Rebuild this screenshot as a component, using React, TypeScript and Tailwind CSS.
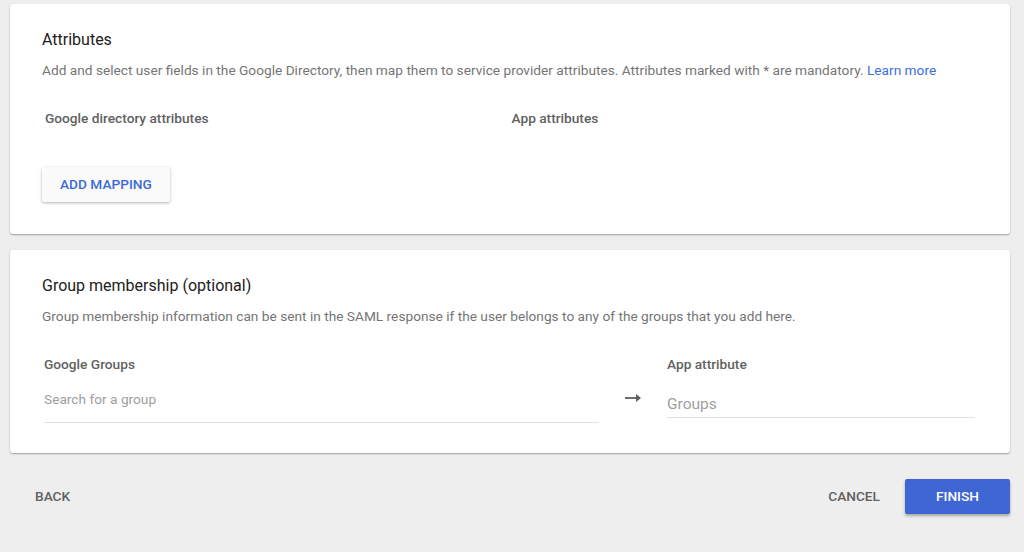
function Card({ children, className = "" }: { children: React.ReactNode; className?: string }) {
  return (
    <section
      className={`rounded-[3px] bg-white px-8 shadow-[0_1px_2px_rgba(0,0,0,0.25),0_1px_1px_rgba(0,0,0,0.1)] ${className}`}
    >
      {children}
    </section>
  );
}

function ArrowRight() {
  return (
    <svg width="16" height="8" viewBox="0 0 16 8" className="text-[#5f5f5f]">
      <rect x="0" y="3.1" width="12" height="1.8" fill="currentColor" />
      <path d="M11 0 L16 4 L11 8 Z" fill="currentColor" />
    </svg>
  );
}

export default function App() {
  return (
    <div className="min-h-[552px] bg-[#eeeeee] pl-[10px] pr-[14px] pt-1 font-['Roboto',sans-serif] text-[13.7px]">
      <Card className="pt-[24px] pb-8">
        <h2 className="text-[16px] leading-6 text-[#212121]">Attributes</h2>
        <p className="mt-[8px] leading-5 text-[#757575]">
          Add and select user fields in the Google Directory, then map them to service provider attributes.
          Attributes marked with * are mandatory.{" "}
          <a className="text-[#3b6fe0]" href="#">
            Learn more
          </a>
        </p>
        <div className="mt-7 grid grid-cols-2 pl-[3px] leading-5 font-medium text-[#616161]">
          <div>Google directory attributes</div>
          <div>App attributes</div>
        </div>
        <button className="mt-[39px] h-[35px] rounded-[2px] bg-[#fafafa] px-[18px] font-medium text-[#3b6bd8] shadow-[0_1px_3px_rgba(0,0,0,0.3)]">
          ADD MAPPING
        </button>
      </Card>

      <Card className="mt-4 pt-[24px] pb-[30px]">
        <h2 className="text-[16px] leading-6 text-[#212121]">Group membership (optional)</h2>
        <p className="mt-[8px] leading-5 text-[#757575]">
          Group membership information can be sent in the SAML response if the user belongs to any of the groups
          that you add here.
        </p>
        <div className="mt-7 flex items-start pl-[2px] pr-[3px]">
          <div className="w-[555px]">
            <div className="leading-5 font-medium text-[#616161]">Google Groups</div>
            <div className="mt-[15px] border-b border-[#e0e0e0] pb-[13px] leading-5 text-[#9e9e9e]">
              Search for a group
            </div>
          </div>
          <div className="flex w-[68px] justify-center pt-[40px]">
            <ArrowRight />
          </div>
          <div className="flex-1">
            <div className="leading-5 font-medium text-[#616161]">App attribute</div>
            <div className="mt-[20px] border-b border-[#e0e0e0] pb-[3px] text-[15.5px] leading-5 text-[#9e9e9e]">
              Groups
            </div>
          </div>
        </div>
      </Card>

      <footer className="mt-[26px] flex items-center justify-between">
        <button className="h-[35px] px-[25px] font-medium text-[#616161]">BACK</button>
        <div className="flex items-center gap-[9px]">
          <button className="h-[35px] px-4 font-medium text-[#616161]">CANCEL</button>
          <button className="h-[35px] w-[105px] rounded-[2px] bg-[#3f67d4] font-medium text-white shadow-[0_2px_3px_rgba(0,0,0,0.3)]">
            FINISH
          </button>
        </div>
      </footer>
    </div>
  );
}
